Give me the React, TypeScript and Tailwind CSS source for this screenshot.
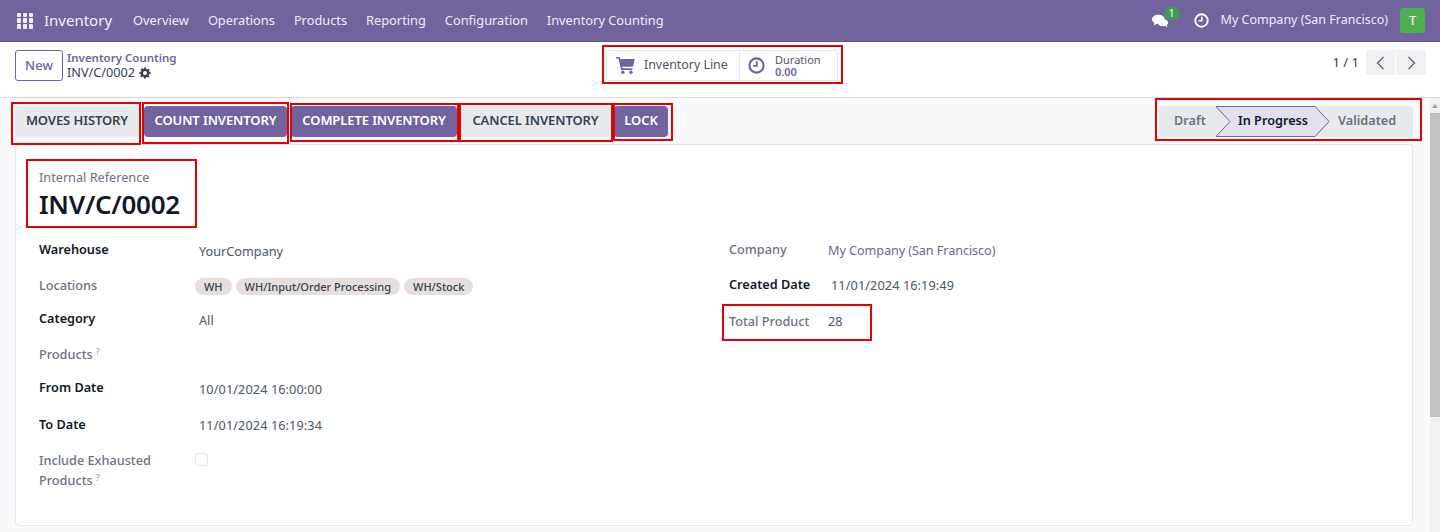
const font = "font-['Noto_Sans',sans-serif]"

function GridIcon() {
    return (
        <div className="grid grid-cols-3 gap-[1.5px] w-[16px] h-[16px]">
            {[1, 2, 3, 4, 5, 6, 7, 8, 9].map((i) => (
                <span key={i} className="bg-[#f2eff7] rounded-[1px]" />
            ))}
        </div>
    )
}

function Gear() {
    return (
        <svg viewBox="0 0 24 24" className="w-[12px] h-[12px] fill-[#374151]">
            <path fillRule="evenodd" d="M10 1h4l.6 3.100 1.700.7 2.600-1.800 2.800 2.800-1.800 2.600.7 1.700L23 10v4l-3.100.6-.7 1.700 1.800 2.600-2.800 2.800-2.600-1.800-1.700.7L14 23h-4l-.6-3.100-1.700-.7-2.600 1.800-2.800-2.800 1.800-2.600-.7-1.700L1 14v-4l3.100-.6.7-1.700L3 5.100 5.800 2.300l2.600 1.800 1.700-.7zM12 8a4 4 0 1 0 0 8 4 4 0 0 0 0-8z" />
        </svg>
    )
}

function Clock({ className }: { className: string }) {
    return (
        <svg viewBox="0 0 24 24" fill="none" stroke="currentColor" strokeWidth="3" className={className}>
            <circle cx="12" cy="12" r="10" />
            <path d="M12.500 6v6.500H7.500" strokeWidth="2.500" />
        </svg>
    )
}

function Cart() {
    return (
        <svg viewBox="0 0 24 22" className="w-[19px] h-[17px] fill-[#71639e]">
            <path d="M0 0h4.500l.7 2.500H24l-2.400 10H7.800l.4 2H21v2.200H6.300L3 2.200H0z" />
            <circle cx="8.500" cy="19.800" r="2.200" />
            <circle cx="19" cy="19.800" r="2.200" />
        </svg>
    )
}

function Chat() {
    return (
        <svg viewBox="0 0 20 16" className="w-[17px] h-[14px] fill-white">
            <ellipse cx="7.500" cy="6" rx="7.500" ry="5.500" />
            <path d="M3 9.500 2 13l5-2.500z" />
            <ellipse cx="13" cy="10" rx="6" ry="4.300" />
            <path d="M15 13l3 2.500-.5-4z" />
        </svg>
    )
}

function ActionButton({ label, primary, className }: { label: string; primary?: boolean; className: string }) {
    return (
        <button className={`h-[31px] pb-[2px] rounded-[4px] text-[13px] font-semibold tracking-[-0.1px] flex items-center justify-center ${primary ? 'bg-[#71639e] text-white' : 'bg-[#e7e9ed] text-[#374151]'} ${className}`}>
            {label}
        </button>
    )
}

function Hint() {
    return <sup className="text-[#5fa8c4] text-[9px] ml-[3px] font-normal">?</sup>
}

function Field({ label, bold, children, className, labelWidth, valueClass }: { label: React.ReactNode; bold?: boolean; children?: React.ReactNode; className: string; labelWidth: string; valueClass: string }) {
    return (
        <div className={`flex items-start ${className}`}>
            <div className={`text-[12.700px] leading-[20px] ${labelWidth} ${bold ? 'font-semibold text-[#111827]' : 'font-medium text-[#6b7280]'}`}>{label}</div>
            <div className={`text-[12.700px] leading-[20px] text-[#4b5563] ${valueClass}`}>{children}</div>
        </div>
    )
}

function Tag({ label }: { label: string }) {
    return <span className="h-[17px] px-[9px] rounded-full bg-[#e6dfdd] text-[11px] leading-[17px] font-medium text-[#374151] whitespace-nowrap">{label}</span>
}

export default function App() {
    return (
        <div className={`relative w-[1440px] h-[532px] overflow-hidden bg-[#f9fafb] ${font}`}>
            {/* navbar */}
            <nav className="h-[42px] bg-[#71639e] border-b border-[#5f5388] flex items-center text-white">
                <div className="ml-[17px]"><GridIcon /></div>
                <span className="ml-[11px] text-[15px] text-[#f3f1f7]">Inventory</span>
                <div className="ml-[21px] flex gap-[19px] text-[12.800px] text-[#efecf5]">
                    <span>Overview</span>
                    <span>Operations</span>
                    <span>Products</span>
                    <span>Reporting</span>
                    <span>Configuration</span>
                    <span>Inventory Counting</span>
                </div>
                <div className="ml-auto flex items-center">
                    <div className="relative w-[17px] h-[14px]">
                        <Chat />
                        <span className="absolute left-[12px] top-[-7px] w-[16px] h-[13px] rounded-full bg-[#3f9d4f] text-[10px] leading-[13px] text-center">1</span>
                    </div>
                    <Clock className="ml-[25px] w-[15px] h-[15px] text-white" />
                    <span className="ml-[12px] text-[12.500px] text-[#efecf5]">My Company (San Francisco)</span>
                    <span className="ml-[12px] mr-[15px] w-[25px] h-[25px] rounded-[3px] bg-[#4caf50] text-[13px] flex items-center justify-center">T</span>
                </div>
            </nav>

            {/* control panel */}
            <div className="h-[56px] bg-white border-b border-[#d8dadd] flex items-start relative">
                <button className="ml-[15px] mt-[8px] w-[48px] h-[31px] border border-[#71639e] rounded-[3px] text-[13px] font-medium text-[#71639e]">New</button>
                <div className="ml-[4px] mt-[8px] leading-[15px] w-[153px]">
                    <div className="text-[11.500px] font-semibold text-[#71639e]">Inventory Counting</div>
                    <div className="text-[12.700px] text-[#374151] flex items-center gap-[4px]">INV/C/0002 <Gear /></div>
                </div>
                <div className="ml-[386px] mt-[8px] w-[232px] h-[31px] flex border border-[#e7e9ed] rounded-[2px]">
                    <div className="w-[133px] shrink-0 flex items-center border-r border-[#e7e9ed]">
                        <span className="ml-[9px]"><Cart /></span>
                        <span className="ml-[9px] text-[12.400px] text-[#4b5563]">Inventory Line</span>
                    </div>
                    <div className="flex items-center flex-1">
                        <Clock className="ml-[8px] w-[17px] h-[17px] text-[#71639e]" />
                        <div className="ml-[10px] leading-[12px]">
                            <div className="text-[11px] text-[#4b5563]">Duration</div>
                            <div className="text-[11px] font-semibold text-[#71639e]">0.00</div>
                        </div>
                    </div>
                </div>
                <div className="ml-auto mr-[14px] mt-[8px] flex items-center">
                    <span className="text-[13px] text-[#374151] mr-[7px]">1 / 1</span>
                    <div className="flex h-[25px] rounded-[3px] overflow-hidden">
                        <span className="w-[30px] bg-[#f0f1f3] border-r border-white flex items-center justify-center">
                            <svg viewBox="0 0 10 16" className="w-[9px] h-[14px]" fill="none" stroke="#4b5563" strokeWidth="1.300"><path d="M8.500 1 1.500 8l7 7" /></svg>
                        </span>
                        <span className="w-[30px] bg-[#f0f1f3] flex items-center justify-center">
                            <svg viewBox="0 0 10 16" className="w-[9px] h-[14px]" fill="none" stroke="#4b5563" strokeWidth="1.300"><path d="M1.500 1l7 7-7 7" /></svg>
                        </span>
                    </div>
                </div>
            </div>

            {/* action bar */}
            <div className="h-[46px] pt-[8px] pl-[15px] pr-[27px] flex items-start">
                <ActionButton label="MOVES HISTORY" className="w-[124px]" />
                <ActionButton label="COUNT INVENTORY" primary className="ml-[5px] w-[143px]" />
                <ActionButton label="COMPLETE INVENTORY" primary className="ml-[4px] w-[166px]" />
                <ActionButton label="CANCEL INVENTORY" className="ml-[4px] w-[149px]" />
                <ActionButton label="LOCK" primary className="ml-[4px] w-[54px]" />
                <div className="ml-auto relative w-[254px] h-[31px] bg-[#e7e9ed] rounded-[2px] text-[12.700px] font-semibold">
                    <svg viewBox="0 0 114 31" className="absolute left-[57px] top-0 w-[114px] h-[31px]">
                        <path d="M0 .5h99L113 15.500 99 30.500H0L14 15.500z" fill="#e2dfee" stroke="#71639e" />
                    </svg>
                    <span className="absolute left-[15px] top-[5px] text-[#6b7280]">Draft</span>
                    <span className="absolute left-[79px] top-[5px] text-[#111827]">In Progress</span>
                    <span className="absolute left-[179px] top-[5px] text-[#6b7280]">Validated</span>
                </div>
            </div>

            {/* form sheet */}
            <div className="ml-[15px] w-[1398px] h-[382px] bg-white border border-[#e5e7eb] rounded-[4px] pl-[23px] pt-[22px]">
                <div className="text-[12.700px] leading-[20px] text-[#6b7280]">Internal Reference</div>
                <div className="text-[26px] leading-[34px] font-semibold text-[#111827] tracking-[-0.25px]">INV/C/0002</div>
                <div className="mt-[18px] flex">
                    <div className="w-[690px]">
                        <Field label="Warehouse" bold labelWidth="w-[160px]" className="h-[36px]" valueClass="mt-[2px]">YourCompany</Field>
                        <Field label="Locations" labelWidth="w-[156px]" className="h-[33px]" valueClass="mt-[3px] flex gap-[4px]">
                            <Tag label="WH" />
                            <Tag label="WH/Input/Order Processing" />
                            <Tag label="WH/Stock" />
                        </Field>
                        <Field label="Category" bold labelWidth="w-[160px]" className="h-[36px]" valueClass="mt-[2px]">All</Field>
                        <Field label={<>Products<Hint /></>} labelWidth="w-[160px]" className="h-[33px]" valueClass="" />
                        <Field label="From Date" bold labelWidth="w-[160px]" className="h-[37px]" valueClass="mt-[2px] tracking-[0.1px]">10/01/2024 16:00:00</Field>
                        <Field label="To Date" bold labelWidth="w-[160px]" className="h-[36px]" valueClass="mt-[1px] tracking-[0.1px]">11/01/2024 16:19:34</Field>
                        <div className="flex">
                            <div className="w-[156px] text-[12.700px] leading-[20px] font-medium text-[#6b7280]">Include Exhausted Products<Hint /></div>
                            <span className="mt-[3px] w-[13px] h-[13px] border border-[#e5e7eb] rounded-[3px]" />
                        </div>
                    </div>
                    <div>
                        <Field label="Company" labelWidth="w-[99px]" className="h-[35px]" valueClass="mt-[1px] text-[#71639e] tracking-[-0.1px]">My Company (San Francisco)</Field>
                        <Field label="Created Date" bold labelWidth="w-[102px]" className="h-[37px]" valueClass="mt-[1px] tracking-[0.1px]">11/01/2024 16:19:49</Field>
                        <Field label="Total Product" labelWidth="w-[99px]" className="h-[32px]" valueClass="">28</Field>
                    </div>
                </div>
            </div>

            {/* scrollbar */}
            <div className="absolute right-0 top-[98px] bottom-0 w-[10px] bg-[#f1f1f1]">
                <div className="h-[15px] flex items-center justify-center">
                    <span className="w-0 h-0 border-x-[3px] border-x-transparent border-b-[4px] border-b-[#a3a3a3]" />
                </div>
                <div className="h-[304px] bg-[#c1c1c1]" />
            </div>

            {/* red annotation boxes */}
            <div className="absolute left-[602px] top-[45px] w-[241px] h-[39px] border-2 border-[#e60000]" />
            <div className="absolute left-[11px] top-[102px] w-[130px] h-[43px] border-2 border-[#e60000]" />
            <div className="absolute left-[142px] top-[102px] w-[147px] h-[42px] border-2 border-[#e60000]" />
            <div className="absolute left-[290px] top-[103px] w-[169px] h-[39px] border-2 border-[#e60000]" />
            <div className="absolute left-[459px] top-[103px] w-[154px] h-[39px] border-2 border-[#e60000]" />
            <div className="absolute left-[613px] top-[103px] w-[60px] h-[38px] border-2 border-[#e60000]" />
            <div className="absolute left-[1155px] top-[98px] w-[267px] h-[43px] border-2 border-[#e60000]" />
            <div className="absolute left-[26px] top-[159px] w-[171px] h-[69px] border-2 border-[#e60000]" />
            <div className="absolute left-[722px] top-[304px] w-[150px] h-[37px] border-2 border-[#e60000]" />
        </div>
    )
}
